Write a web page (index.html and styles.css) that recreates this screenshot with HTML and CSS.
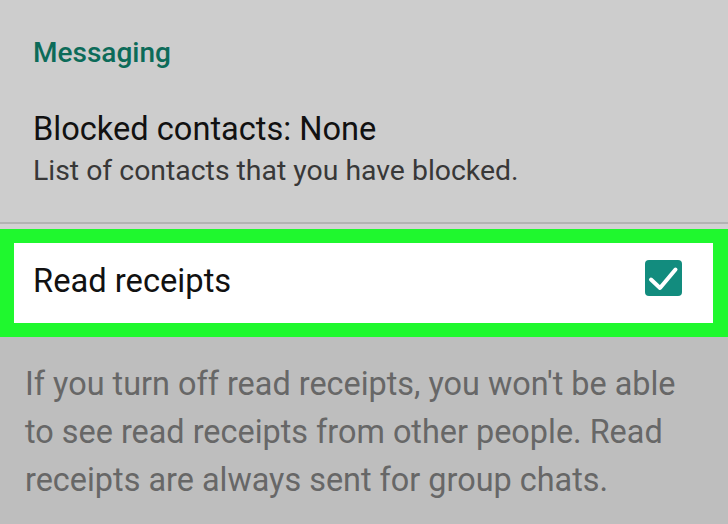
FILE: index.html
```html
<!DOCTYPE html>
<html>
<head>
<meta charset="utf-8">
<link rel="stylesheet" href="styles.css">
</head>
<body>
<div class="screen">
  <div class="top">
    <div class="header">Messaging</div>
    <div class="item">
      <div class="item-title">Blocked contacts: None</div>
      <div class="item-sub">List of contacts that you have blocked.</div>
    </div>
  </div>
  <div class="divider"></div>
  <div class="gap"></div>
  <div class="highlight">
    <div class="row">
      <div class="row-label">Read receipts</div>
      <div class="checkbox">
        <svg width="37" height="36" viewBox="0 0 37 36">
          <rect x="0" y="0" width="37" height="36" rx="4" fill="#128c7e"/>
          <path d="M6 19.5 L15 28 L30.5 9.5" fill="none" stroke="#ffffff" stroke-width="4" stroke-linecap="round" stroke-linejoin="round"/>
        </svg>
      </div>
    </div>
  </div>
  <div class="footer">
    <p class="footer-text">If you turn off read receipts, you won't be able to see read receipts from other people. Read receipts are always sent for group chats.</p>
  </div>
</div>
</body>
</html>
```

FILE: styles.css
```css
html, body {
  margin: 0;
  padding: 0;
}
body {
  font-family: Roboto, "Liberation Sans", sans-serif;
  background: #bebebe;
}
.screen {
  width: 728px;
  height: 524px;
  overflow: hidden;
  display: flex;
  flex-direction: column;
}
.top {
  background: #cdcdcd;
  height: 222px;
  padding-left: 33px;
  box-sizing: border-box;
  padding-top: 37px;
}
.header {
  font-size: 28px;
  line-height: 32px;
  font-weight: 500;
  color: #0c6b59;
}
.item {
  margin-top: 42px;
}
.item-title {
  font-size: 32.6px;
  line-height: 36px;
  color: #111111;
}
.item-sub {
  font-size: 28.4px;
  line-height: 34px;
  margin-top: 7px;
  color: #383838;
}
.divider {
  height: 2px;
  background: #b3b3b3;
}
.gap {
  height: 5px;
  background: #d3d0d3;
}
.highlight {
  background: #1ff82e;
  padding: 14px 15px 14px 14px;
}
.row {
  background: #ffffff;
  height: 80px;
  display: flex;
  align-items: center;
  justify-content: space-between;
  padding: 0 31px 0 19px;
}
.row-label {
  font-size: 32.7px;
  line-height: 38px;
  padding-bottom: 4px;
  color: #111111;
}
.checkbox {
  align-self: flex-start;
  margin-top: 17px;
  width: 37px;
  height: 36px;
}
.checkbox svg {
  display: block;
}
.footer {
  flex: 1;
  background: #bebebe;
  padding: 23px 20px 0 25px;
}
.footer-text {
  margin: 0;
  font-size: 32.4px;
  line-height: 48px;
  color: #676767;
}
```
